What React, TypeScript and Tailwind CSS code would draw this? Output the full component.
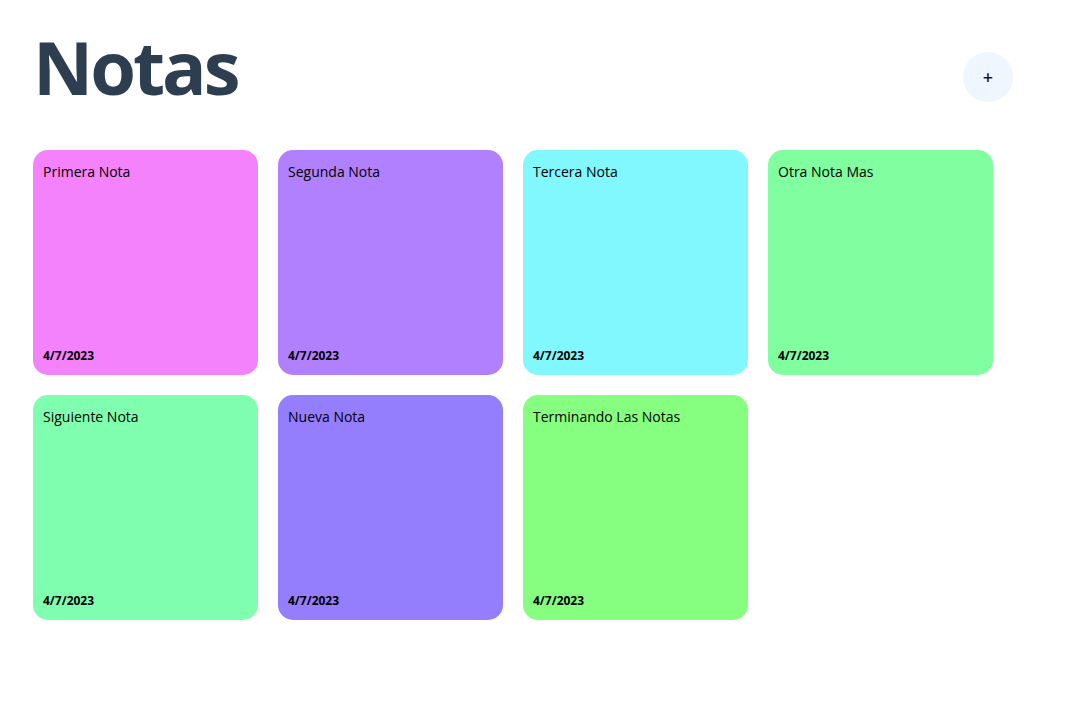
const notes = [
  { title: "Primera Nota", date: "4/7/2023", bg: "bg-[#f582fd]" },
  { title: "Segunda Nota", date: "4/7/2023", bg: "bg-[#b180fe]" },
  { title: "Tercera Nota", date: "4/7/2023", bg: "bg-[#80f8fe]" },
  { title: "Otra Nota Mas", date: "4/7/2023", bg: "bg-[#80fea0]" },
  { title: "Siguiente Nota", date: "4/7/2023", bg: "bg-[#80feb0]" },
  { title: "Nueva Nota", date: "4/7/2023", bg: "bg-[#947efe]" },
  { title: "Terminando Las Notas", date: "4/7/2023", bg: "bg-[#86fe80]" },
];

export default function App() {
  return (
    <div className="min-h-screen bg-white px-[33px] pt-[30px] font-['Open_Sans',sans-serif]">
      <header className="flex w-[980px] items-start justify-between">
        <h1 className="text-[74px] font-bold leading-none tracking-[-3px] text-[#2c3e50]">
          Notas
        </h1>
        <button
          aria-label="agregar nota"
          className="mt-[22px] grid h-[50px] w-[50px] place-items-center rounded-full bg-blue-50 text-lg font-semibold text-[#0b1a3a]"
        >
          +
        </button>
      </header>

      <div className="mt-[46px] grid w-[960px] grid-cols-[repeat(4,225px)] gap-[20px]">
        {notes.map((note) => (
          <div
            key={note.title}
            className={`flex h-[225px] flex-col justify-between rounded-[15px] px-[10px] pb-[10px] pt-[11px] text-black ${note.bg}`}
          >
            <p className="text-[14px]">{note.title}</p>
            <span className="text-[12px] font-bold">{note.date}</span>
          </div>
        ))}
      </div>
    </div>
  );
}
